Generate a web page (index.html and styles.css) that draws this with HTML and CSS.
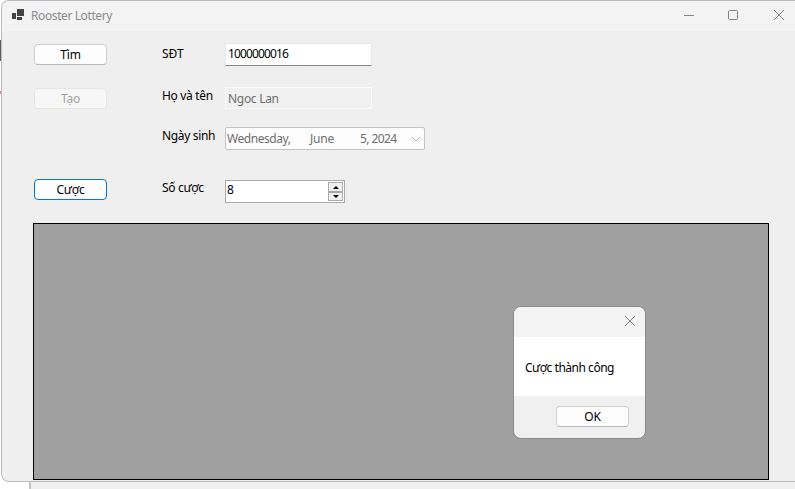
FILE: index.html
```
<!DOCTYPE html>
<html lang="vi">
<head>
<meta charset="utf-8">
<title>Rooster Lottery</title>
<link rel="stylesheet" href="styles.css">
</head>
<body>
<div class="backdrop"><i class="mark dark"></i><i class="mark red"></i><i class="panel"></i></div>
<main class="window">
  <header class="titlebar">
    <svg class="app-icon" width="12" height="12" viewBox="0 0 12 12" shape-rendering="crispEdges"><path d="M5 0h7v7H5zM0 4h4v6H0zM5 8h5v3H5z"/></svg>
    <span class="title">Rooster Lottery</span>
    <nav class="controls">
      <svg width="12" height="12" viewBox="0 0 12 12"><path d="M1 6.5h10"/></svg>
      <svg width="12" height="12" viewBox="0 0 12 12"><rect x="1.5" y="1.5" width="9" height="9" rx="1"/></svg>
      <svg width="12" height="12" viewBox="0 0 12 12"><path d="M1 1l10 10M11 1L1 11"/></svg>
    </nav>
  </header>
  <section class="content">
    <div class="row phone">
      <button class="btn">Tìm</button><label>SĐT</label>
      <div class="field text"><span class="digits">1000000016</span></div>
    </div>
    <div class="row name">
      <button class="btn off">Tạo</button><label>Họ và tên</label>
      <div class="field text readonly"><span>Ngoc Lan</span></div>
    </div>
    <div class="row birth">
      <label>Ngày sinh</label>
      <div class="field date">
        <span class="weekday">Wednesday,</span><span class="month">June</span><span class="day">5, 2024</span>
        <svg width="10" height="6" viewBox="0 0 10 6"><path d="M1 1l4 4 4-4"/></svg>
      </div>
    </div>
    <div class="row bet">
      <button class="btn focus">Cược</button><label>Số cược</label>
      <div class="field number"><span>8</span>
        <div class="spin">
          <i><svg width="6" height="3" viewBox="0 0 6 3"><path d="M0 3L3 0l3 3z"/></svg></i>
          <i><svg width="6" height="3" viewBox="0 0 6 3"><path d="M0 0h6L3 3z"/></svg></i>
        </div>
      </div>
    </div>
    <div class="datagrid"></div>
  </section>
</main>
<div class="dialog" role="dialog">
  <div class="dialog-bar"><svg width="12" height="12" viewBox="0 0 12 12"><path d="M1 1l10 10M11 1L1 11"/></svg></div>
  <div class="dialog-body">Cược thành công</div>
  <div class="dialog-foot"><button class="btn">OK</button></div>
</div>
</body>
</html>
```
FILE: styles.css
```
* { box-sizing: border-box; }
html, body { margin: 0; width: 795px; height: 489px; overflow: hidden; }
body { position: relative; background: #fff; color: #000; font: 12px/16px "Noto Sans", "Open Sans", sans-serif; }
svg { display: block; fill: none; stroke: #858585; stroke-width: 1; }
.backdrop i { position: absolute; }
.panel { left: 29px; top: 470px; right: 0; bottom: 0; background: #efefef; border-left: 2px solid #c4c4c4; }
.mark { left: 0; width: 2px; }
.mark.dark { top: 40px; height: 21px; background: #5c6066; }
.mark.red { top: 91px; height: 3px; background: #f08068; }

.window { position: relative; width: 810px; height: 482px; margin-left: 1px; border: 1px solid #bcbcbe; border-top-color: #b9b6c2; border-radius: 8px; background: #efefef; overflow: hidden; }
.titlebar { display: flex; align-items: center; height: 30px; padding-left: 10px; background: #f3f3f3; color: #8b8b8b; }
.app-icon { fill: #444; stroke: none; margin-top: -2px; }
.title { margin-left: 7px; letter-spacing: -.4px; }
.controls { display: flex; gap: 33px; margin: -2px 25px 0 auto; }
.controls svg:first-child, .controls svg:nth-child(2) { margin-left: -1px; }
.controls svg:last-child { margin-left: 1px; }
.content { padding: 12px 0 0 31px; }
.row { display: flex; height: 23px; }
.row label { width: 63px; margin-left: 55px; letter-spacing: -.33px; white-space: nowrap; }
.name { margin-top: 21px; }
.birth { margin-top: 17px; padding-left: 74px; }
.bet { margin-top: 30px; }
.row.phone label { padding-top: 3px; letter-spacing: 0; }
.name label { padding-top: 1px; }
.birth label { padding-top: 1px; }
.bet label { margin-top: 0; }

.btn { flex: none; width: 73px; height: 21px; margin: 1px 0 0 1px; padding: 0; border: 1px solid #d0d0d0; border-bottom-color: #b9b9bd; border-radius: 4px; background: #fdfdfd; color: #000; font: inherit; line-height: 20px; letter-spacing: -.2px; text-align: center; }
.btn.off { border-color: #e5e5e5; background: #f7f7f7; color: #a0a0a0; }
.btn.focus { margin-top: -1px; border-color: #0078d4; }

.field { flex: none; height: 23px; background: #fff; white-space: nowrap; }
.text { width: 147px; padding: 2px; border: 1px solid #e9e9e9; border-bottom-color: #868686; letter-spacing: -.3px; }
.digits { letter-spacing: -.87px; }
.readonly { height: 22px; padding-top: 3px; background: #f0f0f0; border-color: #f9f9f9; color: #6d6d6d; }
.date { display: flex; align-items: center; width: 200px; padding-left: 1px; border: 1px solid #c3c3c3; border-radius: 2px; background: #fdfdfd; color: #6d6d6d; }
.weekday { width: 83px; letter-spacing: -.45px; }
.month { width: 50px; letter-spacing: -.2px; }
.day { width: 51px; letter-spacing: -.6px; }
.date svg { stroke: #b0b0b0; }
.number { display: flex; justify-content: space-between; width: 120px; padding: 1px; border: 1px solid #ababab; }
.spin { display: grid; width: 15px; height: 19px; grid-template-rows: 10px 9px; }
.spin i { display: flex; align-items: center; justify-content: center; border: 1px solid #ababab; background: #f0f0f0; }
.spin svg { fill: #000; stroke: none; }
.datagrid { width: 736px; height: 257px; margin-top: 20px; border: 1px solid #000; background: #a0a0a0; }

.dialog { position: absolute; left: 513px; top: 306px; width: 133px; height: 133px; border: 1px solid #8a8a8a; border-radius: 8px; background: #f0f0f0; overflow: hidden; }
.dialog-bar { display: flex; justify-content: flex-end; height: 30px; padding: 8px 9px 0 0; background: #f3f3f3; }
.dialog-body { height: 59px; padding: 23px 0 0 11px; background: #fff; letter-spacing: -.48px; white-space: nowrap; }
.dialog-foot { padding: 9px 0 0 41px; }
```
